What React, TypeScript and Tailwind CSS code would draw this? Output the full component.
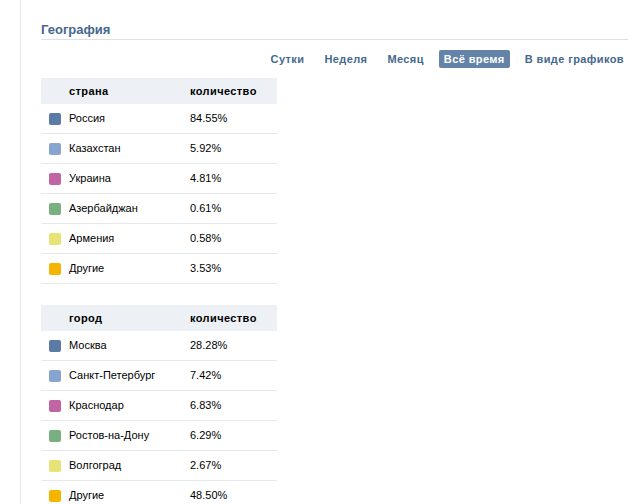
import React from 'react'

type Row = { name: string; value: string; color: string }

const countries: Row[] = [
  { name: 'Россия', value: '84.55%', color: 'bg-[#5b7ba6]' },
  { name: 'Казахстан', value: '5.92%', color: 'bg-[#87a3cf]' },
  { name: 'Украина', value: '4.81%', color: 'bg-[#c064a4]' },
  { name: 'Азербайджан', value: '0.61%', color: 'bg-[#79b07f]' },
  { name: 'Армения', value: '0.58%', color: 'bg-[#e7e475]' },
  { name: 'Другие', value: '3.53%', color: 'bg-[#f4b400]' },
]

const cities: Row[] = [
  { name: 'Москва', value: '28.28%', color: 'bg-[#5b7ba6]' },
  { name: 'Санкт-Петербург', value: '7.42%', color: 'bg-[#87a3cf]' },
  { name: 'Краснодар', value: '6.83%', color: 'bg-[#c064a4]' },
  { name: 'Ростов-на-Дону', value: '6.29%', color: 'bg-[#79b07f]' },
  { name: 'Волгоград', value: '2.67%', color: 'bg-[#e7e475]' },
  { name: 'Другие', value: '48.50%', color: 'bg-[#f4b400]' },
]

const tabs = ['Сутки', 'Неделя', 'Месяц', 'Всё время', 'В виде графиков']

function StatTable({ title, rows }: { title: string; rows: Row[] }) {
  return (
    <div className="w-[236px]">
      <div className="flex h-[26px] items-center bg-[#edf0f5] text-[11px] font-bold tracking-[0.4px] text-black">
        <div className="w-[149px] pl-[28px]">{title}</div>
        <div>количество</div>
      </div>
      {rows.map((r) => (
        <div
          key={r.name}
          className="flex h-[30px] items-center border-b border-[#e7e8ec] text-[11px] text-black"
        >
          <div className="flex w-[149px] items-center">
            <span className={`ml-[8px] mr-[8px] h-[12px] w-[12px] rounded-[2px] ${r.color}`} />
            <span>{r.name}</span>
          </div>
          <div>{r.value}</div>
        </div>
      ))}
    </div>
  )
}

export default function App() {
  return (
    <div
      className="min-h-screen bg-white"
      style={{ fontFamily: '"Liberation Sans", Arial, sans-serif' }}
    >
      <div className="ml-[20px] min-h-screen border-l border-[#e7e8ec] pl-[20px] pr-[10px] pt-[22px]">
        <div className="border-b border-[#dae1e8] pb-[1px] text-[13px] font-bold leading-[16px] text-[#45688e]">
          География
        </div>

        <div className="mt-[10px] -mr-[1px] flex justify-end gap-[10px]">
          {tabs.map((t) => (
            <div
              key={t}
              className={`flex h-[18px] items-center rounded-[2px] px-[5px] text-[11px] font-bold tracking-[0.4px] ${
                t === 'Всё время' ? 'bg-[#6383a8] text-white' : 'text-[#45688e]'
              }`}
            >
              {t}
            </div>
          ))}
        </div>

        <div className="mt-[10px]">
          <StatTable title="страна" rows={countries} />
        </div>
        <div className="mt-[21px]">
          <StatTable title="город" rows={cities} />
        </div>
      </div>
    </div>
  )
}
